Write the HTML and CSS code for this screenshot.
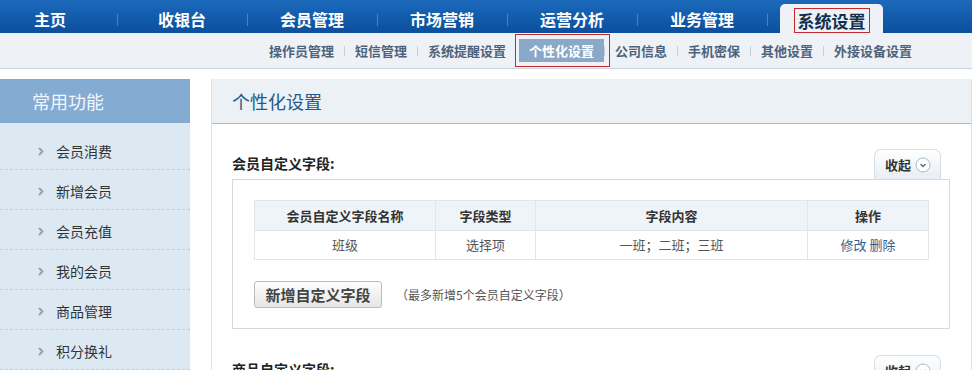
FILE: index.html
```html
<!DOCTYPE html>
<html lang="zh-CN">
<head>
    <meta charset="UTF-8">
    <title>个性化设置</title>
    <link rel="stylesheet" href="styles.css">
</head>
<body>
    <ul class="topnav">
        <li><a href="#">主页</a></li>
        <li><a href="#">收银台</a></li>
        <li><a href="#">会员管理</a></li>
        <li><a href="#">市场营销</a></li>
        <li><a href="#">运营分析</a></li>
        <li><a href="#">业务管理</a></li>
        <li class="active"><a href="#"><span>系统设置</span></a></li>
    </ul>

    <ul class="subnav">
        <li><a href="#">操作员管理</a></li>
        <li><a href="#">短信管理</a></li>
        <li><a href="#">系统提醒设置</a></li>
        <li class="active"><a href="#">个性化设置</a></li>
        <li><a href="#">公司信息</a></li>
        <li><a href="#">手机密保</a></li>
        <li><a href="#">其他设置</a></li>
        <li><a href="#">外接设备设置</a></li>
    </ul>

    <div class="layout">
        <div class="sidebar">
            <div class="sidebar-title">常用功能</div>
            <ul class="side-menu">
                <li><svg width="6" height="9" viewBox="0 0 6 9"><polyline points="1,1 4.5,4.5 1,8" fill="none" stroke="#a0a0a0" stroke-width="2"/></svg>会员消费</li>
                <li><svg width="6" height="9" viewBox="0 0 6 9"><polyline points="1,1 4.5,4.5 1,8" fill="none" stroke="#a0a0a0" stroke-width="2"/></svg>新增会员</li>
                <li><svg width="6" height="9" viewBox="0 0 6 9"><polyline points="1,1 4.5,4.5 1,8" fill="none" stroke="#a0a0a0" stroke-width="2"/></svg>会员充值</li>
                <li><svg width="6" height="9" viewBox="0 0 6 9"><polyline points="1,1 4.5,4.5 1,8" fill="none" stroke="#a0a0a0" stroke-width="2"/></svg>我的会员</li>
                <li><svg width="6" height="9" viewBox="0 0 6 9"><polyline points="1,1 4.5,4.5 1,8" fill="none" stroke="#a0a0a0" stroke-width="2"/></svg>商品管理</li>
                <li><svg width="6" height="9" viewBox="0 0 6 9"><polyline points="1,1 4.5,4.5 1,8" fill="none" stroke="#a0a0a0" stroke-width="2"/></svg>积分换礼</li>
            </ul>
        </div>

        <div class="panel">
            <div class="panel-title">个性化设置</div>
            <div class="panel-body">
                <div class="section">
                    <div class="section-head">
                        <h3>会员自定义字段:</h3>
                        <button class="collapse">收起
                            <svg width="16" height="16" viewBox="0 0 16 16"><circle cx="8" cy="8" r="7" fill="#fff" stroke="#a9b9c8"/><polyline points="5.5,7 8,9.5 10.5,7" fill="none" stroke="#4a6a8a" stroke-width="1.3"/></svg>
                        </button>
                    </div>
                    <div class="section-box">
                        <table class="field-table">
                            <tr>
                                <th class="col-name">会员自定义字段名称</th>
                                <th class="col-type">字段类型</th>
                                <th class="col-content">字段内容</th>
                                <th class="col-op">操作</th>
                            </tr>
                            <tr>
                                <td>班级</td>
                                <td>选择项</td>
                                <td>一班；二班；三班</td>
                                <td><a href="#">修改</a> <a href="#">删除</a></td>
                            </tr>
                        </table>
                        <div class="add-row">
                            <button class="add-btn">新增自定义字段</button>
                            <span class="hint">（最多新增5个会员自定义字段）</span>
                        </div>
                    </div>
                </div>

                <div class="section">
                    <div class="section-head">
                        <h3>商品自定义字段:</h3>
                        <button class="collapse">收起
                            <svg width="16" height="16" viewBox="0 0 16 16"><circle cx="8" cy="8" r="7" fill="#fff" stroke="#a9b9c8"/><polyline points="5.5,7 8,9.5 10.5,7" fill="none" stroke="#4a6a8a" stroke-width="1.3"/></svg>
                        </button>
                    </div>
                    <div class="section-box">
                        <table class="field-table">
                            <tr>
                                <th class="col-name">商品自定义字段名称</th>
                                <th class="col-type">字段类型</th>
                                <th class="col-content">字段内容</th>
                                <th class="col-op">操作</th>
                            </tr>
                        </table>
                    </div>
                </div>
            </div>
        </div>
    </div>
</body>
</html>
```

FILE: styles.css
```css
body {
    margin: 0;
    font-family: "Noto Sans CJK SC", "Liberation Sans", sans-serif;
    font-size: 13px;
    color: #333;
    background: #fff;
    overflow: hidden;
}
ul {
    list-style: none;
    margin: 0;
    padding: 0;
}
a {
    text-decoration: none;
}
.topnav {
    display: flex;
    height: 33px;
    background: linear-gradient(#1c69bb, #0b4f9d);
}
.topnav li {
    position: relative;
    width: 130px;
    text-align: center;
}
.topnav li:first-child {
    width: 117px;
    padding-right: 17px;
    box-sizing: border-box;
}
.topnav li + li::before {
    content: '';
    position: absolute;
    left: 0;
    top: 14px;
    height: 12px;
    border-left: 1px solid #4584c6;
}
.topnav a {
    display: block;
    line-height: 38px;
    height: 33px;
    color: #fff;
    font-size: 16px;
    font-weight: bold;
}
.topnav li.active a {
    margin: 4px 14px 0 13px;
    height: 29px;
    background: #eef2f7;
    border-radius: 5px 5px 0 0;
    color: #15304f;
    font-size: 17px;
    line-height: 29px;
}
.topnav li.active span {
    display: inline-block;
    margin-top: 4px;
    padding: 0 3px;
    line-height: 23px;
    border: 1px solid #c22a2e;
    vertical-align: top;
}
.subnav {
    display: flex;
    align-items: center;
    height: 35px;
    padding-left: 258px;
    background: #eef2f6;
    border-bottom: 1px solid #cdd6de;
}
.subnav li {
    position: relative;
}
.subnav li + li::before {
    content: '';
    position: absolute;
    left: 0;
    top: 7px;
    height: 10px;
    border-left: 1px solid #c7d0d9;
}
.subnav li.active::before {
    display: none;
}
.subnav a {
    display: block;
    margin-left: 1px;
    padding: 0 10px;
    line-height: 23px;
    font-size: 13px;
    font-weight: bold;
    color: #4d637b;
}
.subnav li.active a {
    margin-left: 3px;
    background: #8aa8c8;
    color: #fff;
}
/* red marker box drawn around the current sub item */
.subnav li.active::after {
    content: '';
    position: absolute;
    left: -1px;
    right: -6px;
    top: -5px;
    bottom: -5px;
    border: 1px solid #c22a2e;
}
.layout {
    display: flex;
    gap: 21px;
    padding-top: 10px;
}
.sidebar {
    width: 190px;
    flex-shrink: 0;
}
.sidebar-title {
    height: 44px;
    line-height: 44px;
    padding-left: 32px;
    background: #84abd2;
    color: #f2f6fb;
    font-size: 18px;
}
.side-menu {
    background: #dce9f3;
    padding-top: 7px;
}
.side-menu li {
    display: flex;
    align-items: center;
    gap: 12px;
    height: 36px;
    padding-left: 38px;
    padding-top: 3px;
    border-bottom: 1px dashed #c3d0da;
    font-size: 14px;
    color: #333;
}
.panel {
    flex: 1;
    border-left: 1px solid #dbe2e8;
    border-right: 1px solid #dbe2e8;
}
.panel-title {
    height: 44px;
    line-height: 44px;
    padding-left: 20px;
    background: #ecf1f6;
    border-bottom: 1px solid #a9bccf;
    color: #245a8b;
    font-size: 18px;
}
.panel-body {
    padding: 25px 21px 0 20px;
}
.section {
    margin-bottom: 26px;
}
.section-head {
    display: flex;
    justify-content: space-between;
    align-items: flex-end;
    height: 30px;
}
.section-head h3 {
    margin: 0 0 8px;
    font-size: 14px;
    line-height: 16px;
    color: #222;
}
.collapse {
    display: flex;
    align-items: center;
    gap: 4px;
    height: 30px;
    margin-right: 9px;
    padding: 0 9px 0 10px;
    border: 1px solid #d7dfe6;
    border-bottom: none;
    border-radius: 7px 7px 0 0;
    background: linear-gradient(#fff, #e8eef4);
    font-family: inherit;
    font-size: 13px;
    font-weight: bold;
    color: #333;
}
.section-box {
    border: 1px solid #d3dae0;
    padding: 20px 20px 20px 21px;
}
.field-table {
    width: 100%;
    border-collapse: collapse;
}
.field-table th,
.field-table td {
    border: 1px solid #dfe6ec;
    text-align: center;
    font-size: 13px;
    padding: 0;
    line-height: 18px;
}
.field-table th {
    height: 29px;
    background: #eff4f8;
    color: #333;
}
.field-table td {
    height: 28px;
    color: #555;
}
.field-table td a {
    color: #2f5f90;
}
.col-name { width: 180px; }
.col-type { width: 99px; }
.col-op { width: 120px; }
.add-row {
    display: flex;
    align-items: center;
    gap: 14px;
    margin-top: 21px;
}
.add-btn {
    height: 27px;
    width: 128px;
    border: 1px solid #bcbcbc;
    border-radius: 3px;
    background: linear-gradient(#fdfdfd, #e6e6e6);
    font-family: inherit;
    font-size: 15px;
    font-weight: bold;
    color: #444;
    padding: 0;
}
.hint {
    font-size: 12px;
    color: #555;
}
```
